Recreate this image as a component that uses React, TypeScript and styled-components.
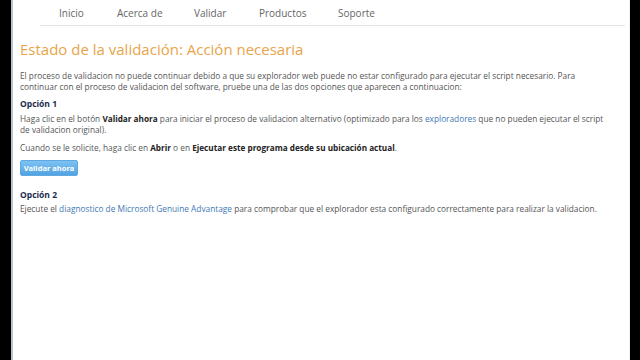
import styled, { createGlobalStyle } from 'styled-components';

const Global = createGlobalStyle`
  html, body { margin: 0; padding: 0; background: #000; }
  body { font-family: "Open Sans", "Liberation Sans", sans-serif; }
`;

const Frame = styled.div`
  display: flex;
  width: 640px;
  height: 360px;
  background: #000;
`;

const Page = styled.div`
  margin-left: 11px;
  width: 619px;
  height: 360px;
  background: #fff;
  border-left: 2px solid #b9c4cc;
  border-right: 1px solid #f0f0f0;
  box-sizing: border-box;
  display: flex;
  flex-direction: column;
`;

const Nav = styled.nav`
  display: flex;
  flex: none;
  height: 26px;
  align-items: center;
  margin-left: 27px;
  margin-right: 4px;
  padding-left: 19px;
  border-bottom: 1px solid #e4e4e4;
  box-sizing: border-box;
`;

const NavItem = styled.a<{ w: number }>`
  width: ${p => p.w}px;
  font-size: 10px;
  color: #666;
  text-decoration: none;
`;

const Content = styled.main`
  padding: 13px 0 0 7px;
`;

const Title = styled.h1`
  margin: 0 0 11px;
  font-weight: normal;
  font-size: 15px;
  line-height: 20px;
  color: #e9a44a;
`;

const P = styled.p<{ gap?: number }>`
  margin: 0 0 ${p => p.gap ?? 0}px;
  font-size: 8.3px;
  line-height: 11px;
  color: #555;
  width: 588px;

  b {
    color: #222;
    font-size: 8.2px;
  }
`;

const Heading = styled.h2<{ gap: number }>`
  margin: 0 0 ${p => p.gap}px;
  font-size: 8.5px;
  font-weight: bold;
  color: #1d2b4f;
  line-height: 11px;
`;

const Link = styled.a`
  color: #3f78b5;
  text-decoration: none;
`;

const Button = styled.button`
  display: block;
  margin: 0 0 13px;
  width: 58px;
  height: 16px;
  padding: 0;
  border: 1px solid #61a8e2;
  border-radius: 2px;
  background: linear-gradient(#7cc2f3, #52a3e2);
  color: #fff;
  font-family: inherit;
  font-size: 7.5px;
  font-weight: bold;
`;

export default function App() {
  return (
    <>
      <Global />
      <Frame>
        <Page>
          <Nav>
            <NavItem w={58}>Inicio</NavItem>
            <NavItem w={77}>Acerca de</NavItem>
            <NavItem w={65}>Validar</NavItem>
            <NavItem w={79}>Productos</NavItem>
            <NavItem w={60}>Soporte</NavItem>
          </Nav>
          <Content>
            <Title>Estado de la validación: Acción necesaria</Title>
            <P gap={6}>
              El proceso de validacion no puede continuar debido a que su explorador web puede no estar configurado para ejecutar el script necesario. Para continuar con el proceso de validacion del software, pruebe una de las dos opciones que aparecen a continuacion:
            </P>
            <Heading gap={4}>Opción 1</Heading>
            <P gap={7}>
              Haga clic en el botón <b>Validar ahora</b> para iniciar el proceso de validacion alternativo (optimizado para los <Link>exploradores</Link> que no pueden ejecutar el script de validacion original).
            </P>
            <P gap={7}>
              Cuando se le solicite, haga clic en <b>Abrir</b> o en <b>Ejecutar este programa desde su ubicación actual</b>.
            </P>
            <Button>Validar ahora</Button>
            <Heading gap={3}>Opción 2</Heading>
            <P>
              Ejecute el <Link>diagnostico de Microsoft Genuine Advantage</Link> para comprobar que el explorador esta configurado correctamente para realizar la validacion.
            </P>
          </Content>
        </Page>
      </Frame>
    </>
  );
}
